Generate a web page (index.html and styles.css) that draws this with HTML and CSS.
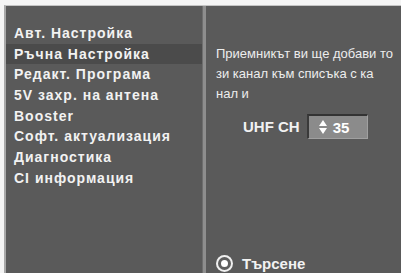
FILE: index.html
```html
<!DOCTYPE html>
<html lang="bg">
<head>
<meta charset="utf-8">
<link rel="stylesheet" href="styles.css">
</head>
<body>
<div class="screen">
  <div class="menu">
    <div class="item">Авт. Настройка</div>
    <div class="item active">Ръчна Настройка</div>
    <div class="item">Редакт. Програма</div>
    <div class="item">5V захр. на антена</div>
    <div class="item">Booster</div>
    <div class="item">Софт. актуализация</div>
    <div class="item">Диагностика</div>
    <div class="item">CI информация</div>
  </div>
  <div class="divider"></div>
  <div class="detail">
    <p class="info">Приемникът ви ще добави то<br>зи канал към списъка с ка<br>нал и</p>
    <div class="channel">
      <span class="label">UHF CH</span>
      <div class="spin">
        <svg class="arrows" width="8" height="14" viewBox="0 0 8 14"><path d="M4 0 L8 6 L0 6 Z M0 8 L8 8 L4 14 Z" fill="#fff"/></svg>
        <span class="value">35</span>
      </div>
    </div>
    <div class="grow"></div>
    <div class="radio-row">
      <span class="radio"><span class="dot"></span></span>
      <span class="radio-label">Търсене</span>
    </div>
  </div>
</div>
</body>
</html>
```
FILE: styles.css
```css
html, body {
  margin: 0;
  padding: 0;
  background: #f4f4f4;
}
body {
  width: 401px;
  height: 273px;
  overflow: hidden;
  padding: 5px 0 0 4px;
  box-sizing: border-box;
  font-family: "Liberation Sans", Arial, sans-serif;
}
.screen {
  display: flex;
  height: 268px;
  background: #5a5a5a;
  border-top: 1px solid #c4c4c4;
  border-left: 2px solid #a8a8a8;
  box-sizing: border-box;
}
.menu {
  width: 196px;
  padding-top: 17px;
  box-sizing: border-box;
}
.item {
  height: 20.7px;
  line-height: 20.7px;
  padding-left: 8px;
  color: #f2f2f2;
  font-weight: bold;
  font-size: 14px;
  letter-spacing: 1px;
  white-space: nowrap;
}
.item.active {
  background: #4b4b4b;
}
.divider {
  width: 3px;
  background: #8e8e8e;
  border-left: 1px solid #6e6e6e;
}
.detail {
  flex: 1;
  display: flex;
  flex-direction: column;
  padding: 0 0 0 10px;
}
.info {
  margin: 38px 0 0 0;
  color: #ededed;
  font-size: 13px;
  line-height: 20px;
  letter-spacing: 0;
  white-space: nowrap;
}
.channel {
  display: flex;
  align-items: center;
  gap: 7px;
  margin-top: 10px;
  padding-left: 27px;
}
.label {
  color: #f2f2f2;
  font-weight: bold;
  font-size: 15px;
}
.spin {
  width: 61px;
  height: 25px;
  box-sizing: border-box;
  background: #8b8b8b;
  border-top: 2px solid #333;
  border-left: 2px solid #3a3a3a;
  border-right: 1px solid #a0a0a0;
  border-bottom: 1px solid #a0a0a0;
  display: flex;
  align-items: center;
  padding-left: 10px;
  gap: 6px;
}
.value {
  color: #fff;
  font-weight: bold;
  font-size: 15px;
}
.grow {
  flex: 1;
}
.radio-row {
  display: flex;
  align-items: center;
  gap: 9px;
  margin-bottom: 1px;
  height: 18px;
}
.radio {
  width: 17px;
  height: 17px;
  border-radius: 50%;
  background: #f0f0f0;
  display: flex;
  align-items: center;
  justify-content: center;
}
.dot {
  width: 7px;
  height: 7px;
  border-radius: 50%;
  background: #fff;
  border: 3px solid #5e5e5e;
}
.radio-label {
  color: #f2f2f2;
  font-weight: bold;
  font-size: 15px;
}
```
